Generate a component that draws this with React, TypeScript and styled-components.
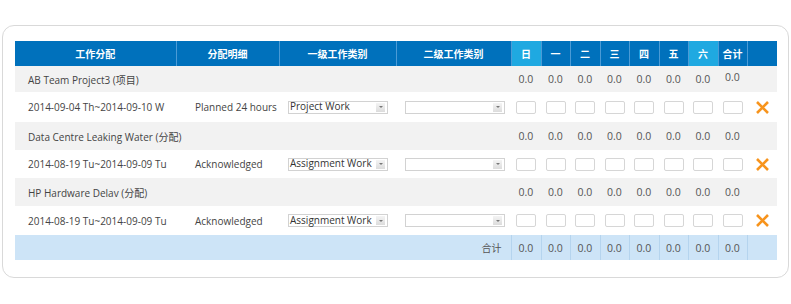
import React from "react";
import styled, { createGlobalStyle } from "styled-components";

const GlobalStyle = createGlobalStyle`
  html, body {
    margin: 0;
    padding: 0;
    background: #ffffff;
  }
  body {
    font-family: "Open Sans", "Noto Sans CJK SC", sans-serif;
  }
`;

const Page = styled.div`
  padding: 25px 2px 0 2px;
  width: 791px;
  box-sizing: border-box;
`;

const Card = styled.div`
  width: 787px;
  height: 253px;
  box-sizing: border-box;
  border: 1px solid #d9d9d9;
  border-radius: 12px;
  padding: 15px 0 0 12px;
`;

const Table = styled.table`
  width: 762px;
  table-layout: fixed;
  border-collapse: collapse;
  font-size: 10px;
  color: #444;
`;

const HeadCell = styled.th<{ $weekend?: boolean }>`
  height: 25px;
  padding: 0;
  background: ${({ $weekend }) => ($weekend ? "#1fa9e1" : "#0071bc")};
  color: #fff;
  font-size: 10px;
  font-weight: bold;
  text-align: center;
  border-left: 1px solid #4b9bd6;
  font-family: "Noto Sans CJK SC", "Open Sans", sans-serif;
  &:first-child {
    border-left: none;
  }
`;

const Row = styled.tr<{ $kind: "group" | "detail" | "total"; $h: number }>`
  height: ${({ $h }) => $h}px;
  background: ${({ $kind }) =>
    $kind === "group" ? "#f2f2f2" : $kind === "total" ? "#cde4f7" : "#ffffff"};
`;

const NameCell = styled.td`
  padding: 0 0 0 13px;
  white-space: nowrap;
`;

const InfoCell = styled.td`
  padding: 0 0 0 19px;
  white-space: nowrap;
`;

const SelectCell = styled.td`
  padding: 0 0 0 9px;
`;

const NumCell = styled.td<{ $raise?: boolean; $lined?: boolean }>`
  padding: ${({ $raise }) => ($raise ? "0 0 4px 0" : "0")};
  text-align: center;
  color: #555;
  font-size: 10.5px;
  border-left: ${({ $lined }) => ($lined ? "1px solid #b5d4ee" : "none")};
`;

const TotalLabel = styled.td`
  padding: 0 9px 0 0;
  text-align: right;
  color: #555;
  font-family: "Noto Sans CJK SC", "Open Sans", sans-serif;
`;

const EmptyCell = styled.td<{ $lined?: boolean }>`
  padding: 0;
  border-left: ${({ $lined }) => ($lined ? "1px solid #b5d4ee" : "none")};
`;

const IconCell = styled.td`
  padding: 0;
  text-align: center;
  vertical-align: middle;
  svg {
    display: block;
    margin: 0 auto;
  }
`;

const FakeSelect = styled.div`
  width: 100px;
  height: 13px;
  box-sizing: border-box;
  border: 1px solid #d2d2d2;
  background: #fff;
  display: flex;
  align-items: center;
  justify-content: space-between;
  padding-left: 1px;
  font-size: 10px;
  color: #333;
`;

const SelectText = styled.span`
  white-space: nowrap;
  line-height: 1;
  margin-top: -2px;
`;

const Arrow = styled.span`
  flex: none;
  width: 9px;
  height: 9px;
  margin-right: 2px;
  background: linear-gradient(#f4f4f4, #dcdcdc);
  display: flex;
  align-items: center;
  justify-content: center;
  &::after {
    content: "";
    border-left: 2px solid transparent;
    border-right: 2px solid transparent;
    border-top: 2px solid #777;
  }
`;

const HourBox = styled.div`
  width: 20px;
  height: 13px;
  box-sizing: border-box;
  margin: 0 auto;
  border: 1px solid #d6d6d6;
  border-radius: 2px;
  background: #fff;
`;

const days = ["日", "一", "二", "三", "四", "五", "六", "合计"];
const widths = [161, 103, 117, 115, 30, 29, 30, 29, 30, 29, 30, 29, 30];

type Task = {
  name: string;
  range: string;
  info: string;
  type: string;
  groupH: number;
  detailH: number;
};

const tasks: Task[] = [
  {
    name: "AB Team Project3 (项目)",
    range: "2014-09-04 Th~2014-09-10 W",
    info: "Planned 24 hours",
    type: "Project Work",
    groupH: 26,
    detailH: 30,
  },
  {
    name: "Data Centre Leaking Water (分配)",
    range: "2014-08-19 Tu~2014-09-09 Tu",
    info: "Acknowledged",
    type: "Assignment Work",
    groupH: 28,
    detailH: 28,
  },
  {
    name: "HP Hardware Delav (分配)",
    range: "2014-08-19 Tu~2014-09-09 Tu",
    info: "Acknowledged",
    type: "Assignment Work",
    groupH: 28,
    detailH: 29,
  },
];

const RemoveIcon = () => (
  <svg width="15" height="15" viewBox="0 0 15 15">
    <path d="M2 2 L13 13 M13 2 L2 13" stroke="#f7941d" strokeWidth="2.6" strokeLinecap="butt" />
  </svg>
);

const Select = ({ value }: { value: string }) => (
  <FakeSelect>
    <SelectText>{value}</SelectText>
    <Arrow />
  </FakeSelect>
);

const App: React.FC = () => {
  return (
    <Page>
      <GlobalStyle />
      <Card>
        <Table>
          <colgroup>
            {widths.map((w, i) => (
              <col key={i} style={{ width: w }} />
            ))}
          </colgroup>
          <thead>
            <tr>
              <HeadCell>工作分配</HeadCell>
              <HeadCell>分配明细</HeadCell>
              <HeadCell>一级工作类别</HeadCell>
              <HeadCell>二级工作类别</HeadCell>
              {days.map((d, i) => (
                <HeadCell key={d} $weekend={i === 0 || i === 6}>
                  {d}
                </HeadCell>
              ))}
              <HeadCell />
            </tr>
          </thead>
          <tbody>
            {tasks.map((t, ti) => (
              <React.Fragment key={t.name}>
                <Row $kind="group" $h={t.groupH}>
                  <NameCell colSpan={4}>{t.name}</NameCell>
                  {days.map((d, i) => (
                    <NumCell key={d} $raise={ti === 0 && i === 7}>
                      0.0
                    </NumCell>
                  ))}
                  <EmptyCell />
                </Row>
                <Row $kind="detail" $h={t.detailH}>
                  <NameCell>{t.range}</NameCell>
                  <InfoCell>{t.info}</InfoCell>
                  <SelectCell>
                    <Select value={t.type} />
                  </SelectCell>
                  <SelectCell>
                    <Select value="" />
                  </SelectCell>
                  {days.map((d) => (
                    <NumCell key={d}>
                      <HourBox />
                    </NumCell>
                  ))}
                  <IconCell>
                    <RemoveIcon />
                  </IconCell>
                </Row>
              </React.Fragment>
            ))}
            <Row $kind="total" $h={25}>
              <TotalLabel colSpan={4}>合计</TotalLabel>
              {days.map((d) => (
                <NumCell key={d} $lined>
                  0.0
                </NumCell>
              ))}
              <EmptyCell $lined />
            </Row>
          </tbody>
        </Table>
      </Card>
    </Page>
  );
};

export default App;
